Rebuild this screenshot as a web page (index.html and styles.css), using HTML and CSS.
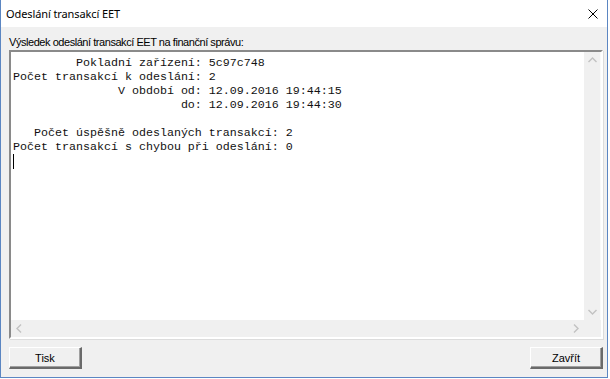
FILE: index.html
```html
<!DOCTYPE html>
<html lang="cs">
<head>
    <meta charset="UTF-8">
    <title>Odeslání transakcí EET</title>
    <link rel="stylesheet" href="styles.css">
</head>
<body>
    <div class="window">
        <div class="titlebar">
            <span class="title">Odeslání transakcí EET</span>
            <span class="close">
                <svg width="10" height="10" viewBox="0 0 10 10"><path d="M0.5 0.5 L9.5 9.5 M9.5 0.5 L0.5 9.5" stroke="#000" stroke-width="1" fill="none"/></svg>
            </span>
        </div>
        <div class="content">
            <div class="label">Výsledek odeslání transakcí EET na finanční správu:</div>
            <div class="textbox">
                <div class="memo">
<pre>         Pokladní zařízení: 5c97c748
Počet transakcí k odeslání: 2
               V období od: 12.09.2016 19:44:15
                        do: 12.09.2016 19:44:30

   Počet úspěšně odeslaných transakcí: 2
Počet transakcí s chybou při odeslání: 0</pre>
                    <div class="caret"></div>
                </div>
                <div class="vscroll">
                    <svg width="17" height="17" viewBox="0 0 17 17"><path d="M4.5 10 L8.5 6 L12.5 10" stroke="#c2c2c2" stroke-width="1.4" fill="none"/></svg>
                    <svg width="17" height="17" viewBox="0 0 17 17"><path d="M4.5 7 L8.5 11 L12.5 7" stroke="#c2c2c2" stroke-width="1.4" fill="none"/></svg>
                </div>
                <div class="hscroll">
                    <svg width="17" height="17" viewBox="0 0 17 17"><path d="M10 4.5 L6 8.5 L10 12.5" stroke="#c2c2c2" stroke-width="1.4" fill="none"/></svg>
                    <svg width="17" height="17" viewBox="0 0 17 17"><path d="M7 4.5 L11 8.5 L7 12.5" stroke="#c2c2c2" stroke-width="1.4" fill="none"/></svg>
                </div>
                <div class="corner"></div>
            </div>
            <div class="buttons">
                <div class="button">Tisk</div>
                <div class="button">Zavřít</div>
            </div>
        </div>
    </div>
</body>
</html>
```

FILE: styles.css
```css
html,body{
    margin:0;
    background-color:#fff;
    font-family:"Liberation Sans", Arial, sans-serif;
}
.window{
    width:606px;
    height:377px;
    border:1px solid #5b86c2;
    border-top:none;
    display:flex;
    flex-direction:column;
    background-color:#f0f0f0;
}
.titlebar{
    height:27px;
    background-color:#fff;
    display:flex;
    align-items:center;
    justify-content:space-between;
    padding-left:5px;
    padding-right:9px;
}
.title{
    font-family:"Noto Sans", sans-serif;
    font-size:11px;
    letter-spacing:-0.1px;
    color:#000;
}
.close{
    display:flex;
}
.content{
    flex:1;
    display:flex;
    flex-direction:column;
    padding:8px 4px 0 8px;
}
.label{
    font-size:11px;
    letter-spacing:-0.45px;
    line-height:14px;
    color:#000;
}
.textbox{
    margin-top:1px;
    height:285px;
    border-top:2px solid #8a8a8a;
    border-left:2px solid #8a8a8a;
    border-right:2px solid #fff;
    border-bottom:2px solid #fff;
    box-shadow:1px 1px 0 #dcdcdc;
    display:grid;
    grid-template-columns:1fr 17px;
    grid-template-rows:1fr 17px;
    background-color:#fff;
}
.memo{
    padding:4px 2px 0 2px;
    overflow:hidden;
}
.memo pre{
    margin:0;
    font-family:"Liberation Mono", "Courier New", monospace;
    font-size:11.67px;
    line-height:14px;
    color:#111;
}
.caret{
    width:1px;
    height:15px;
    background-color:#000;
}
.vscroll{
    background-color:#f0f0f0;
    display:flex;
    flex-direction:column;
    justify-content:space-between;
    border-right:1px solid #fafafa;
}
.hscroll{
    background-color:#f0f0f0;
    display:flex;
    justify-content:space-between;
}
.corner{
    background-color:#f0f0f0;
}
.buttons{
    margin-top:8px;
    display:flex;
    justify-content:space-between;
}
.button{
    width:70px;
    height:19px;
    border-top:1px solid #fff;
    border-left:1px solid #fff;
    border-right:2px solid #6a6a6a;
    border-bottom:2px solid #6a6a6a;
    box-shadow:inset -1px -1px 0 #a0a0a0;
    display:flex;
    align-items:center;
    justify-content:center;
    font-size:11px;
    color:#000;
}
```
